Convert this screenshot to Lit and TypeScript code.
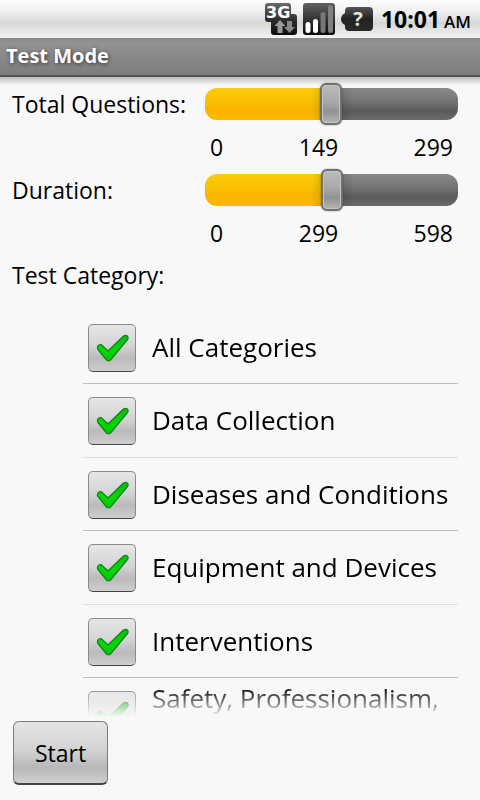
import { LitElement, html, css } from "lit";
import { customElement, property, state } from "lit/decorators.js";
import { classMap } from "lit/directives/class-map.js";

@customElement("status-bar")
class StatusBar extends LitElement {
  static styles = css`
    :host {
      display: flex;
      align-items: center;
      justify-content: flex-end;
      height: 38px;
      padding-right: 9px;
      background: linear-gradient(#fdfdfd 0%, #f0f0f0 30%, #d5d8d5 62%, #e6e6e6 82%, #f2f2f2 100%);
      font-family: "Open Sans", "Noto Sans", sans-serif;
      font-weight: 700;
      color: #000;
      white-space: nowrap;
    }
    svg { overflow: visible; }
    .network { margin-right: 6px; }
    .signal { margin-right: 6px; }
    .battery { margin-right: 8px; }
    .tech { font: 700 16px "DejaVu Sans", sans-serif; fill: #fff; }
    .unknown { font: 700 20px/24px "Open Sans", sans-serif; fill: #e8e4da; }
    .time { font-size: 23px; line-height: 38px; padding-top: 2px; }
    .time small { font-size: 17px; font-weight: 600; margin-left: 4px; }
  `;
  render() {
    return html`
      <svg class="network" width="32" height="32" viewBox="0 0 32 32">
        <defs>
          <linearGradient id="n" x1="0" y1="0" x2="0" y2="1">
            <stop offset="0" stop-color="#6a6a6a" />
            <stop offset=".55" stop-color="#2c2c2c" />
            <stop offset="1" stop-color="#0c0c0c" />
          </linearGradient>
        </defs>
        <path d="M3 0H23Q26 0 26 3V11H29Q32 11 32 14V29Q32 32 29 32H9Q6 32 6 29V19H3Q0 19 0 16V3Q0 0 3 0Z" fill="url(#n)" />
        <text class="tech" x="1" y="15">3G</text>
        <path d="M15 17L20.500 23H17.500V30H12.500V23H9.500Z" fill="#999" />
        <path d="M24.500 30L19 24H22V18H27V24H30Z" fill="#888" />
      </svg>
      <svg class="signal" width="32" height="32" viewBox="0 0 32 32" aria-label="Signal">
        <defs>
          <linearGradient id="s" x1="0" y1="0" x2="0" y2="1">
            <stop offset="0" stop-color="#606060" />
            <stop offset=".55" stop-color="#303030" />
            <stop offset="1" stop-color="#0a0a0a" />
          </linearGradient>
        </defs>
        <rect width="32" height="32" rx="3" fill="url(#s)" />
        <rect x="2.500" y="19" width="5" height="11" rx="2.500" fill="#fff" />
        <rect x="10" y="16" width="5" height="14" rx="2.500" fill="#fff" />
        <rect x="17.500" y="9" width="5" height="21" rx="2.500" fill="#777" />
        <rect x="25" y="2" width="5" height="28" rx="2.500" fill="#808080" />
      </svg>
      <svg class="battery" width="32" height="24" viewBox="0 0 32 24">
        <defs>
          <linearGradient id="b" x1="0" y1="0" x2="0" y2="1">
            <stop offset="0" stop-color="#555" />
            <stop offset=".5" stop-color="#222" />
            <stop offset="1" stop-color="#2a2a2a" />
          </linearGradient>
        </defs>
        <path d="M8 0H28Q32 0 32 4V20Q32 24 28 24H8Q4 24 4 20V18Q0 16 0 12Q0 8 4 6V4Q4 0 8 0Z" fill="url(#b)" />
        <text class="unknown" x="17" y="19" text-anchor="middle">?</text>
      </svg>
      <span class="time">10:01<small>AM</small></span>
    `;
  }
}

@customElement("range-field")
class RangeField extends LitElement {
  @property() label = "";
  @property({ type: Number }) max = 100;
  @property({ type: Number }) value = 50;

  static styles = css`
    :host {
      display: grid;
      grid-template-columns: 193px 1fr;
      height: 86px;
      align-content: start;
    }
    label { line-height: 42px; }
    input {
      appearance: none;
      -webkit-appearance: none;
      display: block;
      width: 100%;
      height: 42px;
      margin: 0;
      background: none;
    }
    input::-webkit-slider-runnable-track {
      height: 32px;
      border-radius: 12px;
      background:
        linear-gradient(90deg, transparent 42%, #0003 50%, transparent 59%),
        linear-gradient(#fccb0c, #f9c000 45%, #f9b400 65%, #fbb900) 0 0 / var(--fill) 100% no-repeat,
        linear-gradient(#888a88, #747674 40%, #5a5c5a 72%, #6a6c6a);
    }
    input::-webkit-slider-thumb {
      -webkit-appearance: none;
      box-sizing: border-box;
      width: 22px;
      height: 42px;
      margin-top: -5px;
      border: 2px solid #707070;
      border-radius: 6px;
      background: linear-gradient(#bbb, #a8a8a8 45%, #929292 70%, #b4b4b4);
      box-shadow: inset 0 0 0 1px #c4c4c4, 0 0 2px #0006;
    }
    .scale {
      grid-column: 2;
      display: grid;
      grid-template-columns: 1fr auto 1fr;
      padding: 0 5px;
      line-height: 44px;
    }
    .mid { margin-right: 26px; }
    .end { text-align: right; }
  `;
  render() {
    return html`
      <label for="range">${this.label}</label>
      <input id="range" type="range" min="0" .max=${String(this.max)} .value=${String(this.value)}
        style="--fill: ${(this.value / this.max) * 100}%"
        @input=${(e: Event) => (this.value = Number((e.target as HTMLInputElement).value))} />
      <div class="scale"><span>0</span><span class="mid">${this.value}</span><span class="end">${this.max}</span></div>
    `;
  }
}

@customElement("app-root")
class AppRoot extends LitElement {
  @state() categories = [
    "All Categories",
    "Data Collection",
    "Diseases and Conditions",
    "Equipment and Devices",
    "Interventions",
    "Safety, Professionalism,",
  ];

  static styles = css`
    :host {
      display: flex;
      flex-direction: column;
      height: 100vh;
      background: #f8f8f8;
      color: #000;
      font: 23px/32px "Open Sans", "Noto Sans", sans-serif;
    }
    h1 {
      margin: 0;
      padding-left: 6px;
      height: 37px;
      border-bottom: 2px solid #505050;
      background: linear-gradient(#8a8a8a, #939393 15%, #7c7c7c);
      color: #fff;
      font-size: 20px;
      line-height: 36px;
      font-weight: 700;
      text-shadow: 1px 1px 4px #0009;
    }
    main {
      flex: 1;
      min-height: 0;
      display: flex;
      flex-direction: column;
      padding: 6px 22px 0 12px;
      background: linear-gradient(#bbb, #f8f8f8 8px);
    }
    h2 {
      margin: 0;
      font-size: 23px;
      line-height: 40px;
      font-weight: 400;
    }
    .list {
      flex: 1;
      min-height: 0;
      overflow: hidden;
      list-style: none;
      margin: 16px 0 0 71px;
      padding: 0;
      -webkit-mask-image: linear-gradient(#000 calc(100% - 30px), transparent);
    }
    .row {
      box-sizing: border-box;
      display: flex;
      align-items: flex-start;
      gap: 16px;
      height: 73px;
      padding-left: 5px;
      border-bottom: 1px solid #bdbdbd;
      font-size: 26px;
      white-space: nowrap;
    }
    .row:nth-child(even) { height: 74px; border-color: #dedede; }
    .row label { margin-top: 13px; line-height: 46px; }
    .row.wrapped label { margin-top: 4px; line-height: 32px; }
    .check { display: grid; margin-top: 13px; }
    .check > * { grid-area: 1 / 1; }
    .check input {
      appearance: none;
      -webkit-appearance: none;
      box-sizing: border-box;
      width: 48px;
      height: 48px;
      margin: 0;
      border: 1px solid #8a8a8a;
      border-bottom-color: #444;
      border-radius: 5px;
      background: linear-gradient(#e6e6e6, #d4d4d4 45%, #bababa 72%, #cecece);
    }
    .check svg { pointer-events: none; }
    .check input:not(:checked) + svg { visibility: hidden; }
    footer { padding: 4px 13px 15px; }
    button {
      display: block;
      width: 95px;
      height: 64px;
      border: 1px solid #7c7c7c;
      border-bottom: 2px solid #444;
      border-radius: 6px;
      background: linear-gradient(#e4e5e4, #d2d3d2 45%, #b7b8b7 75%, #cfcfcf);
      color: #000;
      font: inherit;
      padding: 0;
    }
  `;
  render() {
    return html`
      <status-bar></status-bar>
      <h1>Test Mode</h1>
      <main>
        <range-field label="Total Questions:" .max=${299} .value=${149}></range-field>
        <range-field label="Duration:" .max=${598} .value=${299}></range-field>
        <h2>Test Category:</h2>
        <ul class="list">
          ${this.categories.map(
            (name, i) => html`
              <li class=${classMap({ row: true, wrapped: i === 5 })}>
                <span class="check">
                  <input type="checkbox" id="category-${i}" checked />
                  <svg width="48" height="48" viewBox="0 0 48 48" aria-hidden="true">
                    <defs>
                      <linearGradient id="tick" x1="0" y1="0" x2="0" y2="1">
                        <stop offset="0" stop-color="#12b81a" />
                        <stop offset=".6" stop-color="#06d806" />
                        <stop offset="1" stop-color="#04c404" />
                      </linearGradient>
                    </defs>
                    <path d="M9.500 23Q10 20.500 13 20.500L20 27L35.500 12Q39 10.500 40 13Q40.500 14.500 39.500 15.500L22.500 36Q20.500 37.500 18.500 36L10 25.500Q9 24 9.500 23Z"
                      fill="url(#tick)" stroke="#0a8412" stroke-width="1.200" stroke-linejoin="round" />
                  </svg>
                </span>
                <label for="category-${i}">${name}</label>
              </li>`
          )}
        </ul>
      </main>
      <footer><button type="button">Start</button></footer>
    `;
  }
}
